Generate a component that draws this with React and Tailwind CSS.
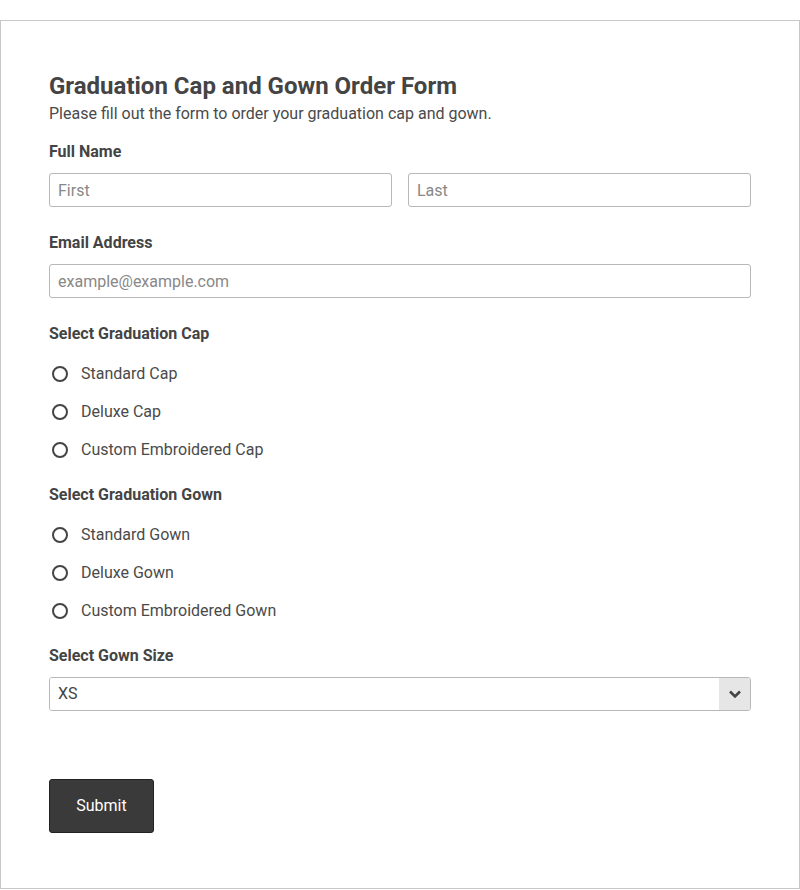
import { useState } from "react";

const CAPS = ["Standard Cap", "Deluxe Cap", "Custom Embroidered Cap"];
const GOWNS = ["Standard Gown", "Deluxe Gown", "Custom Embroidered Gown"];

function Radio({ name, label }) {
  return (
    <label className="flex items-center h-[24px] gap-[13px] text-[16px] text-[#4a4a4a] cursor-pointer">
      <span className="ml-[3px] w-[16px] h-[16px] rounded-full border-2 border-[#444] bg-white" />
      <input type="radio" name={name} className="hidden" />
      {label}
    </label>
  );
}

export default function App() {
  const [size, setSize] = useState("XS");

  return (
    <div className="pt-[20px] bg-white" style={{ fontFamily: "Roboto, 'Liberation Sans', sans-serif" }}>
      <div className="border border-[#c8c8c8] h-[869px] px-[48px] pt-[50px] text-[#444]">
        <h1 className="text-[24px] leading-[30px] font-bold text-[#444]">
          Graduation Cap and Gown Order Form
        </h1>
        <p className="text-[16px] leading-[24px] text-[#4a4a4a] mt-[1px]">
          Please fill out the form to order your graduation cap and gown.
        </p>

        <div className="mt-[16px] text-[16px] leading-[20px] font-bold">Full Name</div>
        <div className="mt-[11px] flex gap-[16px]">
          <input
            placeholder="First"
            className="flex-1 h-[34px] border border-[#b8b8b8] rounded-[3px] px-[8px] text-[16px] placeholder:text-[#888] outline-none"
          />
          <input
            placeholder="Last"
            className="flex-1 h-[34px] border border-[#b8b8b8] rounded-[3px] px-[8px] text-[16px] placeholder:text-[#888] outline-none"
          />
        </div>

        <div className="mt-[26px] text-[16px] leading-[20px] font-bold">Email Address</div>
        <input
          placeholder="example@example.com"
          className="mt-[11px] w-full h-[34px] border border-[#b8b8b8] rounded-[3px] px-[8px] text-[16px] placeholder:text-[#888] outline-none"
        />

        <div className="mt-[26px] text-[16px] leading-[20px] font-bold">Select Graduation Cap</div>
        <div className="mt-[18px] flex flex-col gap-[14px]">
          {CAPS.map((c) => (
            <Radio key={c} name="cap" label={c} />
          ))}
        </div>

        <div className="mt-[23px] text-[16px] leading-[20px] font-bold">Select Graduation Gown</div>
        <div className="mt-[18px] flex flex-col gap-[14px]">
          {GOWNS.map((g) => (
            <Radio key={g} name="gown" label={g} />
          ))}
        </div>

        <div className="mt-[23px] text-[16px] leading-[20px] font-bold">Select Gown Size</div>
        <div className="mt-[11px] relative h-[34px] border border-[#b8b8b8] rounded-[3px] flex overflow-hidden">
          <select
            value={size}
            onChange={(e) => setSize(e.target.value)}
            className="flex-1 appearance-none bg-white px-[8px] text-[16px] text-[#444] outline-none"
          >
            {["XS", "S", "M", "L", "XL", "XXL"].map((s) => (
              <option key={s}>{s}</option>
            ))}
          </select>
          <div className="w-[31px] bg-[#e6e6e6] flex items-center justify-center pointer-events-none">
            <svg width="14" height="10" viewBox="0 0 14 10">
              <path d="M2 2.5 L7 7.5 L12 2.5" fill="none" stroke="#444" strokeWidth="2.6" />
            </svg>
          </div>
        </div>

        <button className="mt-[68px] w-[105px] h-[54px] bg-[#3a3a3a] border border-[#222] rounded-[3px] text-white text-[16px]">
          Submit
        </button>
      </div>
    </div>
  );
}
